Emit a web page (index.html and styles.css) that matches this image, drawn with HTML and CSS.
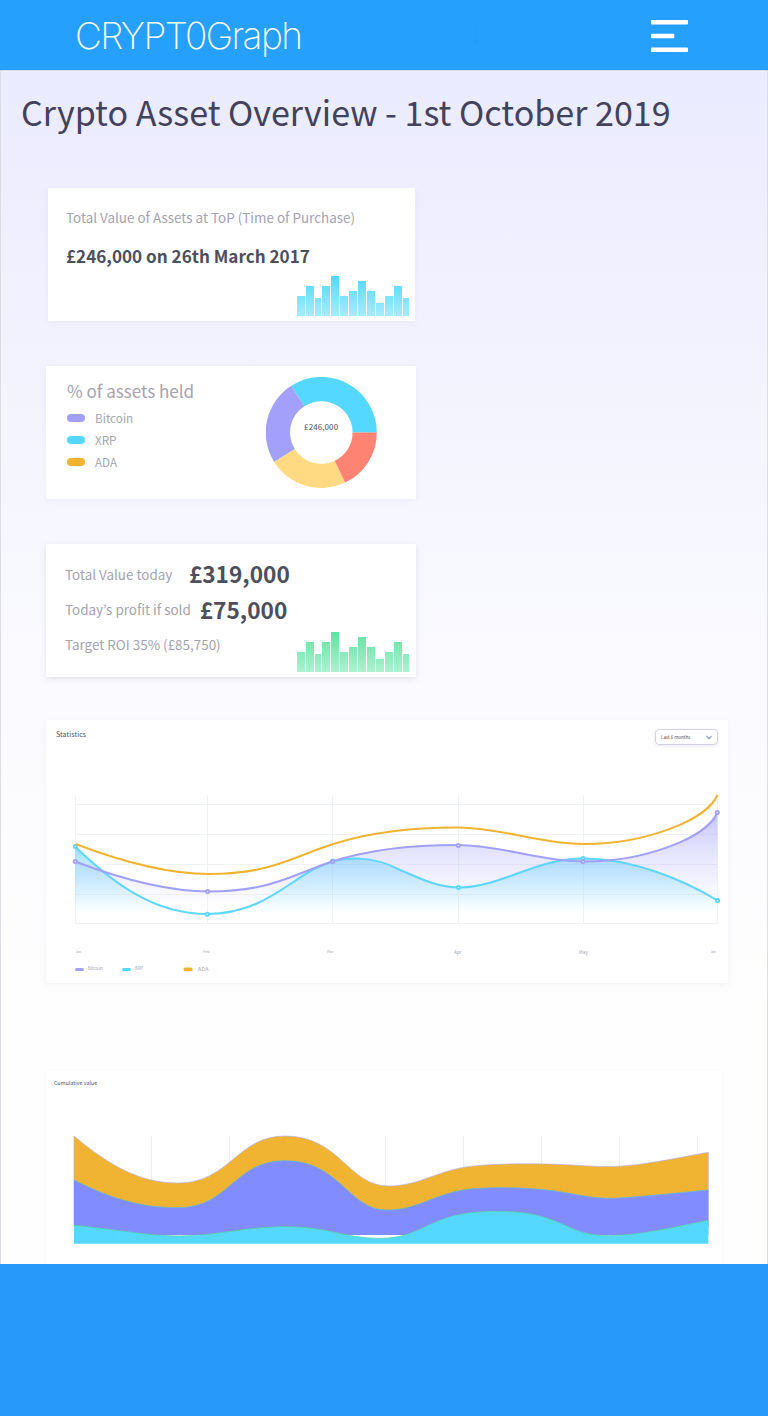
FILE: index.html
```html
<!DOCTYPE html>
<html lang="en">
<head>
<meta charset="utf-8">
<title>CRYPT0Graph</title>
<link rel="stylesheet" href="styles.css">
</head>
<body>
<header class="topbar">
  <div class="logo">CRYPT0Graph</div>
  <svg class="dots" width="4" height="16" viewBox="0 0 4 16"><circle cx="2" cy="2" r="1.2"/><circle cx="2" cy="8" r="1.2"/><circle cx="2" cy="14" r="1.2"/></svg>
  <svg class="menu" width="37" height="32" viewBox="0 0 37 32"><rect width="37" height="4.6" rx=".8"/><rect y="13.7" width="23.3" height="4.6" rx="1"/><rect y="27.4" width="37" height="4.6" rx=".8"/></svg>
</header>
<main class="page">
  <h1 class="title">Crypto Asset Overview - 1st October 2019</h1>

  <section class="card card-purchase">
    <p class="label">Total Value of Assets at ToP (Time of Purchase)</p>
    <p class="amount">£246,000 on 26th March 2017</p>
    <svg class="bars" width="112" height="40" viewBox="0 0 112 40">
      <defs><linearGradient id="blueBars" gradientUnits="userSpaceOnUse" x1="0" y1="0" x2="0" y2="40"><stop offset="0" stop-color="#54d8ff"/><stop offset="1" stop-color="#a8ebff"/></linearGradient></defs>
      <path fill="url(#blueBars)" d="M0 20h8v20H0zM9 10h8v30H9zM18 22h6v18h-6zM25 10h8v30h-8zM34 0h8v40h-8zM43 20h8v20h-8zM52 15h8v25h-8zM61 5h8v35h-8zM70 15h8v25h-8zM79 27h8v13h-8zM88 20h8v20h-8zM97 10h8v30h-8zM106 22h6v18h-6z"/>
    </svg>
  </section>

  <section class="card card-held">
    <div class="held">
      <h2 class="held-title">% of assets held</h2>
      <ul class="legend">
        <li><i class="pill purple"></i>Bitcoin</li>
        <li><i class="pill cyan"></i>XRP</li>
        <li><i class="pill gold"></i>ADA</li>
      </ul>
    </div>
    <svg class="donut" width="112" height="112" viewBox="-55.3 -55.5 112 112">
      <path fill="#54d8ff" d="M55.5 0A55.5 55.5 0 0 0 -30.1 -46.7L-17 -26.3A31.3 31.3 0 0 1 31.3 0Z"/>
      <path fill="#a3a0fb" d="M-30.1 -46.7A55.5 55.5 0 0 0 -47.1 29.4L-26.5 16.6A31.3 31.3 0 0 1 -17 -26.3Z"/>
      <path fill="#ffda83" d="M-47.1 29.4A55.5 55.5 0 0 0 23.8 50.1L13.4 28.3A31.3 31.3 0 0 1 -26.5 16.6Z"/>
      <path fill="#ff8373" d="M23.8 50.1A55.5 55.5 0 0 0 55.5 0L31.3 0A31.3 31.3 0 0 1 13.4 28.3Z"/>
      <text class="donut-text" x="-17.2" y="-2.8" textLength="34">£246,000</text>
    </svg>
  </section>

  <section class="card card-today">
    <div class="row"><span class="label">Total Value today</span><strong class="big today">£319,000</strong></div>
    <div class="row"><span class="label">Today’s profit if sold</span><strong class="big profit">£75,000</strong></div>
    <div class="row"><span class="label">Target ROI 35% (£85,750)</span></div>
    <svg class="bars" width="112" height="40" viewBox="0 0 112 40">
      <defs><linearGradient id="greenBars" gradientUnits="userSpaceOnUse" x1="0" y1="0" x2="0" y2="40"><stop offset="0" stop-color="#5fe3a1"/><stop offset="1" stop-color="#aef1d0"/></linearGradient></defs>
      <path fill="url(#greenBars)" d="M0 20h8v20H0zM9 10h8v30H9zM18 22h6v18h-6zM25 10h8v30h-8zM34 0h8v40h-8zM43 20h8v20h-8zM52 15h8v25h-8zM61 5h8v35h-8zM70 15h8v25h-8zM79 27h8v13h-8zM88 20h8v20h-8zM97 10h8v30h-8zM106 22h6v18h-6z"/>
    </svg>
  </section>

  <section class="card card-stats">
    <div class="stats-head">
      <h2 class="stats-title">Statistics</h2>
      <div class="select"><span>Last 6 months</span><svg class="chevron" width="6" height="5" viewBox="0 0 6 5"><path d="M.5 1L3 3.6L5.5 1" fill="none" stroke="#8f9bb0" stroke-width="1.1"/></svg></div>
    </div>
    <svg class="stats-chart" width="682" height="233" viewBox="46 750 682 233">
      <defs>
        <linearGradient id="btcFill" gradientUnits="userSpaceOnUse" x1="0" y1="812" x2="0" y2="905"><stop offset="0" stop-color="#a3a0fb" stop-opacity=".62"/><stop offset=".4" stop-color="#a3a0fb" stop-opacity=".3"/><stop offset="1" stop-color="#a3a0fb" stop-opacity="0"/></linearGradient>
        <linearGradient id="xrpFill" gradientUnits="userSpaceOnUse" x1="0" y1="846" x2="0" y2="914"><stop offset="0" stop-color="#54d8ff" stop-opacity=".75"/><stop offset=".22" stop-color="#66ccff" stop-opacity=".43"/><stop offset="1" stop-color="#54d8ff" stop-opacity="0"/></linearGradient>
      </defs>
      <path class="grid" d="M75.5 795V923.5M207.5 795V923.5M332.5 795V923.5M458.5 795V923.5M583.5 795V923.5M717.5 795V923.5M75.5 804.5H717.5M75.5 834.5H717.5M75.5 864.5H717.5M75.5 894.5H717.5M75.5 923.5H717.5"/>
      <path fill="url(#btcFill)" d="M75 861.5C128 881.5 170 891.5 209 891.5C270 891.5 290 875.5 332.5 861.5C370 849 410 845 458 845C500 845 540 861.5 585 861.5C645 861.5 707 837.5 717.5 812.5V923.5H75Z"/>
      <path fill="url(#xrpFill)" d="M75 846.5C115 885 155 914 207 914C262 914 290 880 318 867C345 854 375 857 398 869C425 881 440 887.5 460 887.5C500 887.5 535 858.5 583 858.5C630 858.5 680 878 717.5 900.5V923.5H75Z"/>
      <path class="line" stroke="#5fd6ff" d="M75 846.5C115 885 155 914 207 914C262 914 290 880 318 867C345 854 375 857 398 869C425 881 440 887.5 460 887.5C500 887.5 535 858.5 583 858.5C630 858.5 680 878 717.5 900.5"/>
      <g class="dot" stroke="#54d8ff"><circle cx="75.2" cy="846.5" r="1.6"/><circle cx="207.2" cy="914.2" r="1.6"/><circle cx="332.6" cy="861" r="1.6"/><circle cx="458.5" cy="887.5" r="1.6"/><circle cx="583" cy="858.5" r="1.6"/><circle cx="717.5" cy="900.6" r="1.6"/></g>
      <path class="line" stroke="#a3a0fb" d="M75 861.5C128 881.5 170 891.5 209 891.5C270 891.5 290 875.5 332.5 861.5C370 849 410 845 458 845C500 845 540 861.5 585 861.5C645 861.5 707 837.5 717.5 812.5"/>
      <g class="dot" stroke="#a3a0fb"><circle cx="75.2" cy="861.5" r="1.6"/><circle cx="207.6" cy="891.6" r="1.6"/><circle cx="332.8" cy="861.6" r="1.6"/><circle cx="458.3" cy="845.4" r="1.6"/><circle cx="583" cy="861.7" r="1.6"/><circle cx="717.3" cy="812.5" r="1.6"/></g>
      <path class="line" stroke="#f0b432" d="M75.5 844C128 864 170 874 209 874C270 874 290 858 332.5 844.3C370 832 410 827.5 458 827.5C500 827.5 540 844 585 844C645 844 707 820 717.5 795"/>
      <g class="axis">
        <text x="75.3" y="953" font-size="3.6" textLength="6">Jan</text>
        <text x="203" y="953" font-size="3.6" textLength="6.5">Feb</text>
        <text x="327" y="953" font-size="3.6" textLength="6.5">Mar</text>
        <text x="454" y="954" font-size="4.5" textLength="7.3">Apr</text>
        <text x="579" y="954" font-size="4.5" textLength="8.8">May</text>
        <text x="710.5" y="953" font-size="3.6" textLength="5.5">Jan</text>
        <text x="87.7" y="970" font-size="4.6" textLength="15">Bitcoin</text>
        <text x="134.8" y="970" font-size="4.6" textLength="8.4">XRP</text>
        <text x="198" y="971" font-size="5.2" textLength="10.3">ADA</text>
      </g>
      <rect x="75" y="968" width="9" height="3" rx="1.5" fill="#a3a0fb"/>
      <rect x="122" y="968" width="9" height="3" rx="1.5" fill="#54d8ff"/>
      <rect x="183.6" y="967.6" width="9" height="3.7" rx="1.6" fill="#f0b432"/>
    </svg>
  </section>

  <section class="card card-cumulative">
    <h2 class="cumulative-title">Cumulative value</h2>
    <svg class="area-chart" width="676" height="173" viewBox="46 1091 676 173">
      <g transform="translate(30 1060) scale(.33333)">
        <path d="M364.5 228V500M598.5 228V500M832.5 228V500M1066.5 228V500M1300.5 228V500M1534.5 228V500M1768.5 228V500M2002.5 228V500" stroke="#ededf0" stroke-width="3"/>
        <path fill="#f0b432" stroke="#b3b1e6" stroke-width="2" d="M132 228C240 318 330 369 443 369C600 369 620 228 765 228C930 228 955 378 1075 378C1175 378 1225 326 1340 317C1440 309 1530 311 1604 314C1690 318 1735 324 1820 314C1900 304 1960 290 2035 277V500H132Z"/>
        <path fill="#808cff" d="M132 360C240 415 330 443 443 443C600 443 610 302 765 302C930 302 955 450 1070 450C1170 450 1215 396 1330 386C1400 381 1480 382 1560 391C1640 402 1680 415 1740 415C1800 414 1950 398 2035 390V525H132Z"/>
        <path fill="none" stroke="#6cb7d4" stroke-width="2.5" d="M132 360C240 415 330 443 443 443C600 443 610 302 765 302C930 302 955 450 1070 450C1170 450 1215 396 1330 386C1400 381 1480 382 1560 391C1640 402 1680 415 1740 415C1800 414 1950 398 2035 390"/>
        <path fill="#54d8ff" d="M132 496C240 506 350 528 445 528C560 528 650 500 765 500C900 500 940 535 1050 535C1190 535 1190 454 1400 454C1600 454 1600 527 1735 527C1830 527 1940 500 2035 481V551H132Z"/>
        <path fill="none" stroke="#5cd3ad" stroke-width="2.5" d="M132 496C240 506 350 528 445 528C560 528 650 500 765 500C900 500 940 535 1050 535C1190 535 1190 454 1400 454C1600 454 1600 527 1735 527C1830 527 1940 500 2035 481"/>
      </g>
    </svg>
  </section>
</main>
<footer class="footer"></footer>
</body>
</html>
```
FILE: styles.css
```css
* { box-sizing: border-box; }
body {
  margin: 0;
  width: 768px;
  height: 1416px;
  display: flex;
  flex-direction: column;
  font-family: "Noto Sans CJK KR", "Noto Sans", sans-serif;
  color: #43425d;
  overflow: hidden;
}
h1, h2, p, ul { margin: 0; padding: 0; font-weight: 400; }
svg { display: block; flex: none; }

.topbar {
  height: 70px;
  flex: none;
  display: flex;
  align-items: flex-start;
  background: #26a0fd;
  padding-left: 75px;
}
.logo {
  width: 399px;
  padding-top: 14px;
  font: 200 37px/44px Inter, sans-serif;
  letter-spacing: -1.6px;
  color: #fff;
  white-space: nowrap;
}
.dots { margin-top: 27px; fill: #2699fb; }
.menu { margin: 20px 0 0 173px; fill: #fff; }

.page {
  height: 1194px;
  flex: none;
  border: 1px solid #dcdde2;
  border-bottom: 0;
  background: linear-gradient(#ebebff 0, #f5f5ff 32%, #fbfbff 54%, #fefefe 78%, #fefefe 100%);
  overflow: hidden;
}
.title {
  margin: 15px 0 0 20px;
  height: 102px;
  font-size: 34.05px;
  line-height: 52px;
  white-space: nowrap;
}
.card {
  position: relative;
  width: 370px;
  height: 133px;
  margin-left: 45px;
  background: #fff;
  box-shadow: 0 2px 6px rgba(60, 60, 130, .06);
  white-space: nowrap;
}
.label { font-size: 13.45px; line-height: 20px; color: #a4a3b1; }
.bars { position: absolute; right: 7px; bottom: 5px; }

.card-purchase { width: 367px; margin-left: 47px; padding: 19px 18px; }
.card-purchase .bars { right: 6px; }
.amount { margin-top: 16px; font-size: 17.1px; line-height: 26px; font-weight: 700; color: #4d4f5c; }

.card-held { margin-top: 45px; display: flex; padding: 11px 38px 0 21px; justify-content: space-between; }
.held-title { font-size: 17.05px; line-height: 30px; height: 30px; margin-top: -1px; margin-bottom: 1px; color: #a4a3b1; }
.legend { list-style: none; font-size: 11.7px; line-height: 22px; color: #a5a6ae; }
.legend li { display: flex; align-items: center; gap: 10px; }
.pill { width: 18px; height: 8px; border-radius: 4px; }
.purple { background: #a3a0fb; }
.cyan { background: #54d8ff; }
.gold { background: #f0b432; }
.donut-text { font-size: 8px; fill: #4d4f5c; }

.card-today { margin-top: 45px; padding: 12px 19px; box-shadow: 0 2px 6px rgba(60, 60, 100, .12); }
.row { height: 35px; display: flex; align-items: center; }
.big { font-size: 22.65px; line-height: 35px; color: #4d4f5c; }
.today { margin-left: 16.5px; }
.profit { margin: 2px 0 0 9px; }

.card-stats { width: 682px; height: 263px; margin-top: 43px; }
.stats-head { height: 30px; display: flex; justify-content: space-between; padding: 9px 10px 0; }
.stats-title { font-size: 7px; line-height: 11px; letter-spacing: .08px; color: #4d4f5c; }
.select {
  width: 63px;
  height: 16px;
  display: flex;
  align-items: center;
  justify-content: space-between;
  padding: 0 5px 1px;
  border: 1px solid #d3d2e2;
  border-radius: 4px;
  box-shadow: 0 1px 3px rgba(60, 60, 100, .12);
  font-size: 4.5px;
  color: #4d4f5c;
}
.chevron { margin-top: 2px; }
.grid { stroke: #f0f3f6; fill: none; }
.line { fill: none; stroke-width: 2; }
.dot { fill: #e6f2ff; stroke-width: 1.8; }
.axis { fill: #a4a5ae; }

.card-cumulative { width: 676px; height: 193px; margin-top: 88px; box-shadow: 0 1px 5px rgba(60, 60, 130, .04); }
.cumulative-title { height: 20px; padding: 8px 0 0 8px; font-size: 5.3px; line-height: 8px; letter-spacing: .03px; color: #4d4f5c; }

.footer { flex: 1; background: #2699fb; }
```
